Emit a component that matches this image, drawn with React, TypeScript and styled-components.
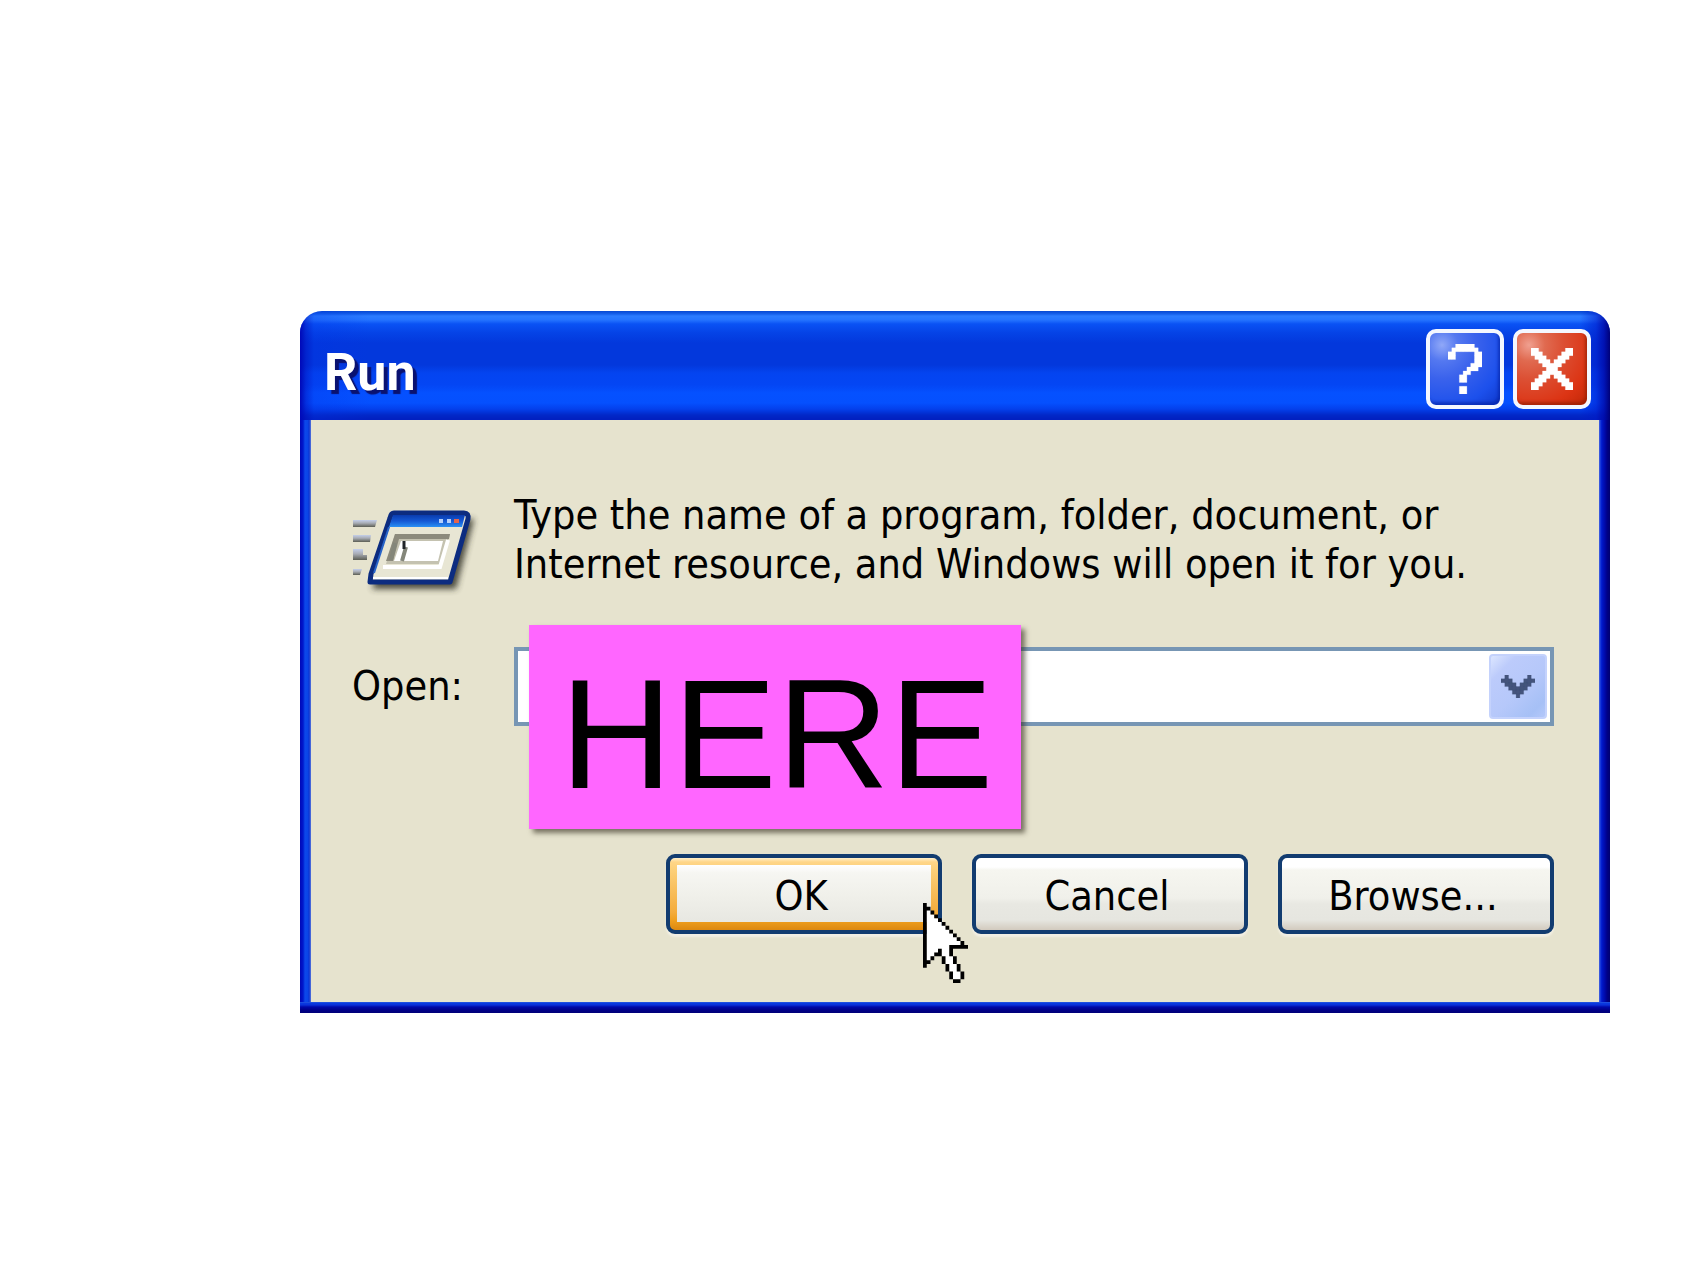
import React from "react";
import styled, { createGlobalStyle } from "styled-components";

const uiFont = `"DejaVu Sans Condensed", Tahoma, "DejaVu Sans", sans-serif`;

const GlobalStyle = createGlobalStyle`
  *, *::before, *::after { box-sizing: border-box; }
  body { margin: 0; background: #ffffff; }
`;

const Page = styled.main`
  padding: 311px 77px 252px 300px;
  font-family: ${uiFont};
  font-size: 41px;
  line-height: 49px;
  color: #000000;
`;

const Dialog = styled.section`
  border-radius: 22px 22px 0 0;
  overflow: hidden;
`;

const TitleBar = styled.header`
  display: flex;
  align-items: center;
  gap: 9px;
  padding: 18px 19px 11px 24px;
  background:
    linear-gradient(to right, #0008b8 0, #0010c080 6px, #0030e840 14px, transparent 70px),
    linear-gradient(to left, #000078 0, #0008a8cc 6px, #0018c880 14px, transparent 30px),
    linear-gradient(
      to bottom,
      #0648d0 0,
      #1560ec 3px,
      #2b7cff 5px,
      #2473ff 9px,
      #0a52f4 13px,
      #0543e6 22px,
      #0338dc 32px,
      #0338dc 54px,
      #0444f0 62px,
      #0446f4 74px,
      #0551ff 82px,
      #0550fe 92px,
      #0440ec 98px,
      #0228c8 104px,
      #0220c0 108px
    );
`;

const Title = styled.h1`
  flex: 1;
  margin: 0;
  padding-top: 8px;
  font-family: Roboto, "Trebuchet MS", sans-serif;
  font-size: 52px;
  line-height: 62px;
  font-weight: 700;
  color: #ffffff;
  text-shadow: 4px 4px 1px #0a1270;
`;

const CaptionButton = styled.button<{ $kind: "help" | "close" }>`
  display: flex;
  align-items: center;
  justify-content: center;
  width: 78px;
  height: 80px;
  padding: 0;
  border: 4px solid #f4f7ff;
  border-radius: 10px;
  background: ${({ $kind }) =>
    $kind === "close"
      ? "radial-gradient(circle at 12px 12px, #f0a090 0, #e06a50 16px, #dc5034 34px, #dc3414 62px, #b82404 90px)"
      : "radial-gradient(circle at 12px 12px, #90a8f8 0, #5478f0 16px, #3a62ec 34px, #1c50ec 62px, #0a30c0 90px)"};
  box-shadow: inset -2px -3px 3px ${({ $kind }) => ($kind === "close" ? "#8c1c0099" : "#0420a099")};
`;

const Frame = styled.div`
  padding: 0 11px 11px;
  background:
    linear-gradient(to top, #000078 0, #000088 3px, #0008a8 6px, #0a30d8 8px, #0a3ce0 10px, #3060e0 11px) bottom / 100% 11px no-repeat,
    linear-gradient(to right, #0008b8 0, #0018cc 3px, #0c48ea 5px, #0a44e6 8px, #0a30d0 9px, #5878dc 11px) left / 11px 100% no-repeat,
    linear-gradient(to left, #000070 0, #000088 3px, #0008a8 5px, #0018c8 8px, #0828d8 9px, #4868e0 11px) right / 11px 100% no-repeat;
`;

const Content = styled.form`
  display: grid;
  grid-template-columns: 162px 1fr;
  padding: 71px 45px 68px 41px;
  background: #e6e3ce;
`;

const ProgramIcon = styled.svg`
  display: block;
  align-self: end;
`;

const Message = styled.p`
  margin: 0;
`;

const OpenLabel = styled.label`
  align-self: center;
  margin-top: 58px;
`;

const ComboBox = styled.div`
  position: relative;
  display: flex;
  height: 79px;
  margin-top: 58px;
  padding: 3px;
  border: 4px solid #7796b4;
  background: #ffffff;
`;

const ComboInput = styled.input`
  flex: 1;
  min-width: 0;
  padding: 0 8px;
  border: 0;
  outline: 0;
  background: transparent;
  font: inherit;
`;

const DropButton = styled.button`
  display: flex;
  align-items: center;
  justify-content: center;
  width: 58px;
  padding: 0;
  border: 2px solid #c4d2fc;
  border-radius: 4px;
  background: linear-gradient(135deg, #dce6ff 0, #bccbfb 22%, #b6c8fa 55%, #a6c0f6 85%, #b4c8fa 100%);
`;

const Note = styled.strong`
  position: absolute;
  left: 11px;
  top: -26px;
  z-index: 1;
  padding: 19px 28px 5px 31px;
  background: #ff66ff;
  box-shadow: 4px 4px 5px rgba(60, 55, 40, 0.65);
  font-family: "Liberation Sans", Arial, sans-serif;
  font-size: 156px;
  line-height: 180px;
  font-weight: 400;
`;

const Actions = styled.div`
  grid-column: 1 / -1;
  display: flex;
  justify-content: flex-end;
  gap: 30px;
  margin-top: 128px;
`;

const PushButton = styled.button<{ $default?: boolean }>`
  position: relative;
  width: 276px;
  height: 80px;
  padding: 4px 6px 0 0;
  border: 4px solid #123c70;
  border-radius: 9px;
  background: ${({ $default }) =>
    $default
      ? `linear-gradient(#ffffff 0, #f6f6f2 8px, #f0f0ea 30px, #e8e8e2 56px) 7px 7px / calc(100% - 14px) calc(100% - 15px) no-repeat,
         linear-gradient(#fff0cc 0, #ffd688 4px, #fccf78 12px, #f4ac3c 54px, #f0a020 62px, #dc8810 72px)`
      : "linear-gradient(#ffffff 0, #ffffff 9px, #f6f6f0 12px, #f0f0ea 40px, #e8e8e2 46px, #e6e6e0 62px, #d2cabe 72px)"};
  box-shadow: 0 3px 2px #f2efe4;
  font: inherit;
  color: #000000;
`;

const Pointer = styled.svg`
  position: absolute;
  left: 253px;
  top: 45px;
  z-index: 2;
  pointer-events: none;
`;

const helpGlyph = [
  "..XXXXX..",
  ".XXXXXXX.",
  "XX.....XX",
  "XX.....XX",
  ".......XX",
  "......XXX",
  ".....XXX.",
  "....XX...",
  "...XX....",
  "...XX....",
  ".........",
  "...XX....",
  "...XX....",
];

const closeGlyph = [
  "XX.......XX",
  "XXX.....XXX",
  ".XXX...XXX.",
  "..XXX.XXX..",
  "...XXXXX...",
  "....XXX....",
  "...XXXXX...",
  "..XXX.XXX..",
  ".XXX...XXX.",
  "XXX.....XXX",
  "XX.......XX",
];

const chevronGlyph = [
  ".X.....X.",
  "XXX...XXX",
  ".XXX.XXX.",
  "..XXXXX..",
  "...XXX...",
  "....X....",
];

const pointerGlyph = [
  "X...........",
  "XX..........",
  "XoX.........",
  "XooX........",
  "XoooX.......",
  "XooooX......",
  "XoooooX.....",
  "XooooooX....",
  "XoooooooX...",
  "XooooooooX..",
  "XoooooooooX.",
  "XooooooXXXXX",
  "XoooXooX....",
  "XooXXooX....",
  "XoX..XooX...",
  "XX...XooX...",
  "X.....XooX..",
  "......XooX..",
  ".......XooX.",
  ".......XooX.",
  "........XX..",
];

/* One path per ink, one unit square for each marked cell. */
const cells = (rows: string[], mark: string) =>
  rows
    .flatMap((row, y) => [...row].map((c, x) => (c === mark ? `M${x} ${y}h1v1h-1z` : "")))
    .join("");

function Glyph({ rows, color, width, height }: { rows: string[]; color: string; width: number; height: number }) {
  return (
    <svg width={width} height={height} viewBox={`0 0 ${rows[0].length} ${rows.length}`} preserveAspectRatio="none" aria-hidden="true">
      <path d={cells(rows, "X")} fill={color} stroke={color} strokeWidth="0.06" />
    </svg>
  );
}

function RunIcon() {
  return (
    <ProgramIcon width="124" height="84" viewBox="0 -2 124 84" overflow="visible" aria-hidden="true">
      <defs>
        <linearGradient id="runBar" x1="0" y1="0" x2="0" y2="1">
          <stop offset="0" stopColor="#0a3cae" />
          <stop offset="0.5" stopColor="#1458d4" />
          <stop offset="1" stopColor="#2a90f4" />
        </linearGradient>
        <linearGradient id="runTrail" x1="0" y1="0" x2="0" y2="1">
          <stop offset="0" stopColor="#c4cfea" />
          <stop offset="0.45" stopColor="#a8acb4" />
          <stop offset="1" stopColor="#5c5e54" />
        </linearGradient>
        <filter id="runShade" x="-20%" y="-20%" width="140%" height="150%">
          <feGaussianBlur stdDeviation="3" />
        </filter>
      </defs>
      <path d="M44 12H122L104 82H20Z" fill="#303028" opacity="0.85" filter="url(#runShade)" />
      <path d="M1 13h24l-2 7H1z" fill="url(#runTrail)" />
      <path d="M1 28h18l-1 7H1z" fill="url(#runTrail)" />
      <path d="M1 42h10v6h4v5H1z" fill="url(#runTrail)" />
      <path d="M1 62h9l-2 6H1z" fill="url(#runTrail)" />
      <path d="M42 6H112Q117 6 116 12L98 75H18L19 67L38 11Q39 6 42 6Z" fill="#e8e6d4" stroke="#0c2c80" strokeWidth="5" strokeLinejoin="round" />
      <path d="M41 8H113L110 20H37Z" fill="url(#runBar)" />
      <path d="M37 20L22 66" stroke="#2864c8" strokeWidth="2" fill="none" />
      <path d="M21 71H96" stroke="#ffffff" strokeWidth="2" />
      <path d="M43 27H98L89 57H34Z" fill="#c4c2b0" />
      <path d="M43 27H98L97 32H47L41 54H34Z" fill="#8c8a7c" />
      <path d="M96 33L88 60H31" fill="none" stroke="#ffffff" strokeWidth="4" />
      <path d="M49 34H91L86 54H42Z" fill="#ffffff" />
      <path d="M43 36l-4 17M54 40l-4 14" stroke="#84867a" strokeWidth="4" fill="none" />
      <path d="M52 34v8" stroke="#202428" strokeWidth="3" />
      <path d="M87 12h4v4h-4zM95 12h4v4h-4z" fill="#b4d0fc" />
      <path d="M102 12h5v4h-5z" fill="#e4644c" />
    </ProgramIcon>
  );
}

export default function App() {
  return (
    <>
      <GlobalStyle />
      <Page>
        <Dialog role="dialog" aria-labelledby="run-title">
          <TitleBar>
            <Title id="run-title">Run</Title>
            <CaptionButton $kind="help" type="button" aria-label="Help">
              <Glyph rows={helpGlyph} color="#ffffff" width={34} height={50} />
            </CaptionButton>
            <CaptionButton $kind="close" type="button" aria-label="Close">
              <Glyph rows={closeGlyph} color="#ffffff" width={42} height={42} />
            </CaptionButton>
          </TitleBar>
          <Frame>
            <Content onSubmit={(e: React.FormEvent) => e.preventDefault()}>
              <RunIcon />
              <Message>
                Type the name of a program, folder, document, or
                <br />
                Internet resource, and Windows will open it for you.
              </Message>
              <OpenLabel htmlFor="run-command">Open:</OpenLabel>
              <ComboBox>
                <ComboInput id="run-command" type="text" autoComplete="off" />
                <DropButton type="button" aria-label="Show recent commands">
                  <Glyph rows={chevronGlyph} color="#44547c" width={34} height={23} />
                </DropButton>
                <Note>HERE</Note>
              </ComboBox>
              <Actions>
                <PushButton type="submit" $default>
                  OK
                  <Pointer width="45" height="80" viewBox="0 0 12 21" preserveAspectRatio="none" aria-hidden="true">
                    <path d={cells(pointerGlyph, "o")} fill="#ffffff" stroke="#ffffff" strokeWidth="0.1" />
                    <path d={cells(pointerGlyph, "X")} fill="#000000" />
                  </Pointer>
                </PushButton>
                <PushButton type="button">Cancel</PushButton>
                <PushButton type="button">Browse...</PushButton>
              </Actions>
            </Content>
          </Frame>
        </Dialog>
      </Page>
    </>
  );
}
